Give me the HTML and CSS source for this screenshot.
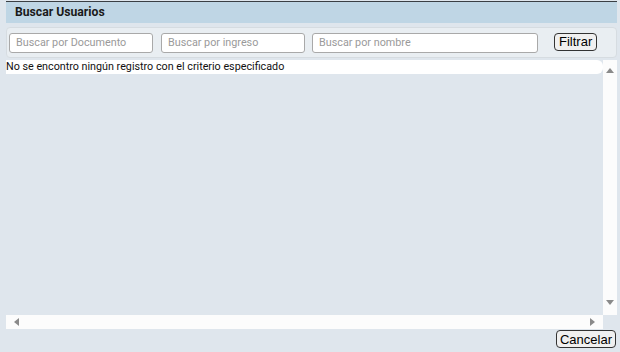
FILE: index.html
```html
<!DOCTYPE html>
<html lang="es">
<head>
    <meta charset="UTF-8">
    <title>Buscar Usuarios</title>
    <link rel="stylesheet" href="styles.css">
</head>
<body>
    <div class="panel">
        <div class="panel-header">Buscar Usuarios</div>

        <div class="filter-bar">
            <input type="text" class="filter-input doc" placeholder="Buscar por Documento">
            <input type="text" class="filter-input ingreso" placeholder="Buscar por ingreso">
            <input type="text" class="filter-input nombre" placeholder="Buscar por nombre">
            <button type="button" class="btn btn-filter">Filtrar</button>
        </div>

        <div class="grid">
            <div class="grid-body">
                <div class="empty-row">No se encontro ningún registro con el criterio especificado</div>
            </div>
            <div class="vscroll">
                <span class="arrow arrow-up"></span>
                <span class="arrow arrow-down"></span>
            </div>
            <div class="hscroll">
                <span class="arrow arrow-left"></span>
                <span class="arrow arrow-right"></span>
            </div>
            <div class="corner"></div>
        </div>

        <div class="panel-footer">
            <button type="button" class="btn btn-cancel">Cancelar</button>
        </div>
    </div>
</body>
</html>
```

FILE: styles.css
```css
* {
    margin: 0;
    padding: 0;
    box-sizing: border-box;
}

body {
    font-family: Roboto, 'Liberation Sans', Arial, sans-serif;
    font-size: 12px;
    color: #111;
    background: #dfe6ed;
    width: 620px;
    height: 352px;
    overflow: hidden;
}

.panel {
    display: flex;
    flex-direction: column;
    height: 352px;
    padding: 1px 3px 0 6px;
}

.panel-header {
    height: 22px;
    border-top: 1px solid #3a3f44;
    background: #bfd6e5;
    padding-left: 9px;
    font-weight: bold;
    font-size: 12.2px;
    line-height: 20px;
    color: #1a1a1a;
}

.filter-bar {
    display: flex;
    align-items: center;
    height: 31px;
    margin-top: 4px;
    padding: 0 2px;
    background: #e9eef2;
    border: 1px solid #d6dce1;
    border-radius: 4px;
}

.filter-input {
    height: 20px;
    border: 1px solid #a9a9a9;
    border-radius: 3px;
    background: #fff;
    padding: 0 6px;
    font-family: inherit;
    font-size: 10.8px;
    color: #333;
}

.filter-input::placeholder {
    color: #9a9a9a;
}

.filter-input.doc {
    width: 144px;
}

.filter-input.ingreso {
    width: 144px;
    margin-left: 8px;
}

.filter-input.nombre {
    width: 226px;
    margin-left: 7px;
}

.btn {
    font-family: 'Liberation Sans', Arial, sans-serif;
    font-size: 13px;
    color: #000;
    background: #f0f0f0;
    border: 1px solid #333;
    border-radius: 4px;
    line-height: 15px;
    padding: 0 4px;
    cursor: pointer;
}

.btn-filter {
    margin-left: 16px;
    height: 18px;
    margin-top: -2px;
}

.grid {
    display: grid;
    grid-template-columns: 1fr 14px;
    grid-template-rows: 1fr 14px;
    height: 269px;
    margin-top: 2px;
}

.grid-body {
    overflow: hidden;
}

.empty-row {
    height: 14px;
    background: #fff;
    border-radius: 0 6px 6px 0;
    font-size: 10.75px;
    line-height: 14px;
    white-space: nowrap;
}

.vscroll,
.hscroll,
.corner {
    background: #fcfcfc;
    position: relative;
}

.corner {
    background: #dfe6ed;
}

.arrow {
    position: absolute;
    width: 0;
    height: 0;
    border: 4px solid transparent;
}

.arrow-up {
    left: 3px;
    top: 8px;
    border-bottom: 5px solid #8a8a8a;
    border-top: 0;
}

.arrow-down {
    left: 3px;
    bottom: 10px;
    border-top: 5px solid #8a8a8a;
    border-bottom: 0;
}

.arrow-left {
    left: 8px;
    top: 3px;
    border-right: 5px solid #8a8a8a;
    border-left: 0;
}

.arrow-right {
    right: 8px;
    top: 3px;
    border-left: 5px solid #8a8a8a;
    border-right: 0;
}

.panel-footer {
    display: flex;
    justify-content: flex-end;
    padding-top: 1px;
}

.btn-cancel {
    height: 18px;
    margin-right: 1px;
    padding: 0 3px;
}
```
